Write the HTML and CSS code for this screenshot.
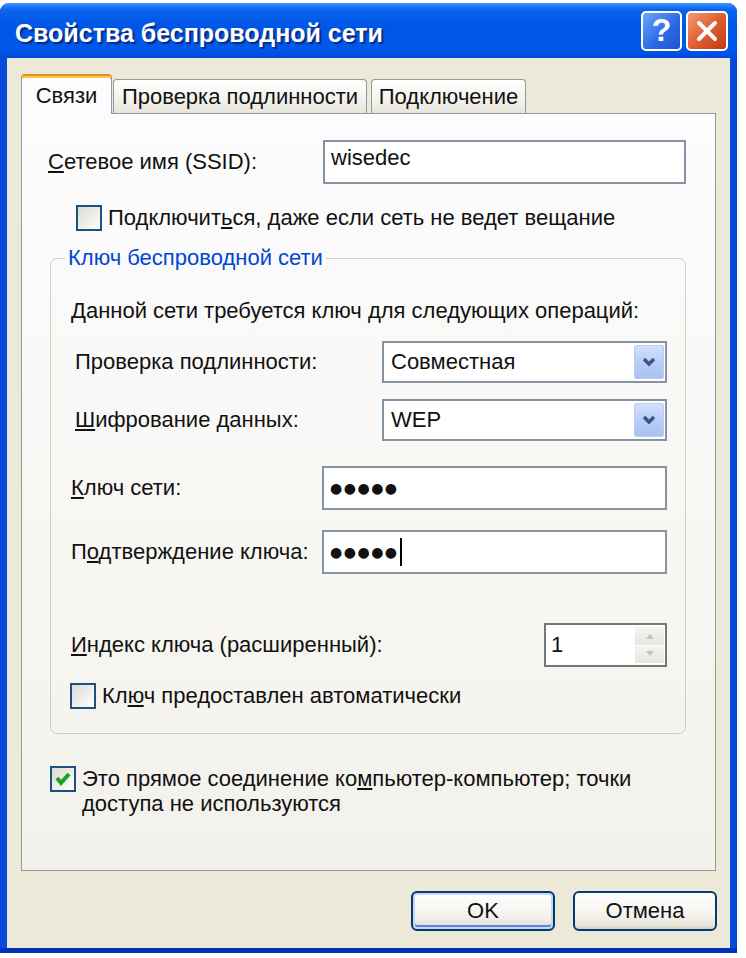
FILE: index.html
```html
<!DOCTYPE html>
<html lang="ru">
<head>
    <meta charset="UTF-8">
    <title>Свойства беспроводной сети</title>
    <link rel="stylesheet" href="styles.css">
</head>
<body>
    <div class="window">
        <div class="titlebar">
            <span class="title">Свойства беспроводной сети</span>
            <div class="caption-buttons">
                <span class="cap-btn help">?</span>
                <span class="cap-btn close">
                    <svg width="24" height="24" viewBox="0 0 24 24"><path d="M4 4 L20 20 M20 4 L4 20" stroke="#fff" stroke-width="4" stroke-linecap="round"/></svg>
                </span>
            </div>
        </div>
        <div class="client">
            <div class="tabs">
                <div class="tab active">Связи</div>
                <div class="tab auth">Проверка подлинности</div>
                <div class="tab conn">Подключение</div>
            </div>
            <div class="panel">
                <div class="row ssid-row">
                    <label><u>С</u>етевое имя (SSID):</label>
                    <div class="edit ssid">wisedec</div>
                </div>
                <div class="check-row broadcast">
                    <span class="checkbox"></span>
                    <span>Подключит<u>ь</u>ся, даже если сеть не ведет вещание</span>
                </div>
                <fieldset class="keybox">
                    <legend>Ключ беспроводной сети</legend>
                    <p class="intro">Данной сети требуется ключ для следующих операций:</p>
                    <div class="row combo-row first">
                        <label>Проверка по<u>д</u>линности:</label>
                        <div class="combo">
                            <span>Совместная</span>
                            <span class="drop"><svg width="14" height="10" viewBox="0 0 14 10"><polyline points="2,2 7,7 12,2" fill="none" stroke="#3F5482" stroke-width="3.5"/></svg></span>
                        </div>
                    </div>
                    <div class="row combo-row">
                        <label><u>Ш</u>ифрование данных:</label>
                        <div class="combo">
                            <span>WEP</span>
                            <span class="drop"><svg width="14" height="10" viewBox="0 0 14 10"><polyline points="2,2 7,7 12,2" fill="none" stroke="#3F5482" stroke-width="3.5"/></svg></span>
                        </div>
                    </div>
                    <div class="row key-row first">
                        <label><u>К</u>люч сети:</label>
                        <div class="edit key"><span class="dots">●●●●●</span></div>
                    </div>
                    <div class="row key-row">
                        <label>П<u>о</u>дтверждение ключа:</label>
                        <div class="edit key"><span class="dots">●●●●●</span><span class="caret"></span></div>
                    </div>
                    <div class="row index-row">
                        <label><u>И</u>ндекс ключа (расширенный):</label>
                        <div class="spin">
                            <span class="spin-value">1</span>
                            <span class="spin-btns">
                                <span class="spin-btn"><svg width="10" height="6" viewBox="0 0 10 6"><polygon points="1,6 5,1 9,6" fill="#C4C2B6"/></svg></span>
                                <span class="spin-btn"><svg width="10" height="6" viewBox="0 0 10 6"><polygon points="1,0 5,5 9,0" fill="#C4C2B6"/></svg></span>
                            </span>
                        </div>
                    </div>
                    <div class="check-row auto">
                        <span class="checkbox"></span>
                        <span>Кл<u>ю</u>ч предоставлен автоматически</span>
                    </div>
                </fieldset>
                <div class="check-row adhoc">
                    <span class="checkbox checked">
                        <svg width="18" height="18" viewBox="0 0 18 18"><polyline points="3,8 7,13 15,4" fill="none" stroke="#21A121" stroke-width="4"/></svg>
                    </span>
                    <span class="adhoc-text">Это прямое соединение ко<u>м</u>пьютер-компьютер; точки<br>доступа не используются</span>
                </div>
            </div>
            <div class="buttons">
                <button class="btn default">OK</button>
                <button class="btn">Отмена</button>
            </div>
        </div>
    </div>
</body>
</html>
```

FILE: styles.css
```css
*{
    box-sizing: border-box;
}
body{
    margin: 0;
    background: #fff;
    font-family: "Liberation Sans", Arial, sans-serif;
    font-size: 22px;
    color: #111;
}
.window{
    width: 737px;
    height: 950px;
    margin-top: 3px;
    display: flex;
    flex-direction: column;
    padding: 0 7px 5px;
    background: linear-gradient(to right, #0847D8, #0058EE 3%, #0058EE 97%, #0845D5);
    border-radius: 9px 9px 0 0;
    box-shadow: inset 0 -5px 0 #0030B8;
}
/* title bar */
.titlebar{
    height: 55px;
    margin: 0 -7px;
    padding: 0 9px 0 15px;
    display: flex;
    align-items: center;
    justify-content: space-between;
    border-radius: 9px 9px 0 0;
    background: linear-gradient(#3D95FF 0%, #0B63EE 12%, #0055E5 45%, #0058EA 85%, #0049D8 100%);
}
.title{
    padding-top: 6px;
    color: #fff;
    font-weight: 700;
    font-size: 25px;
    text-shadow: 2px 2px 1px #0A2A86;
}
.caption-buttons{
    display: flex;
    gap: 4px;
}
.cap-btn{
    width: 42px;
    height: 40px;
    border: 2px solid #fff;
    border-radius: 5px;
    display: flex;
    align-items: center;
    justify-content: center;
    color: #fff;
}
.help{
    width: 41px;
    background: linear-gradient(135deg, #6AA6FB, #2A67E2 60%, #1F55D0);
    font-size: 32px;
    font-weight: 700;
}
.close{
    background: linear-gradient(135deg, #F39A72, #DD5A2D 55%, #C03B16);
}
/* client area */
.client{
    flex: 1;
    display: flex;
    flex-direction: column;
    padding: 16px 14px 17px;
    background: #ECE9D8;
}
.tabs{
    display: flex;
    align-items: flex-end;
    height: 39px;
    position: relative;
    z-index: 1;
}
.tab{
    height: 34px;
    display: flex;
    align-items: center;
    justify-content: center;
    border: 1px solid #919B9C;
    border-bottom: none;
    border-radius: 4px 4px 0 0;
    background: linear-gradient(#FFFFFF, #F3F2EC 60%, #E6E4DA);
}
.tab.active{
    width: 91px;
    height: 40px;
    margin-bottom: -1px;
    padding-top: 2px;
    border-top: 2px solid #E68B2C;
    box-shadow: inset 0 2px 0 #FFC83C;
    background: #FCFCFE;
}
.tab.auth{
    width: 254px;
    margin-left: 1px;
}
.tab.conn{
    width: 155px;
    margin-left: 4px;
}
.panel{
    flex: 1;
    border: 1px solid #919B9C;
    background: linear-gradient(#FCFCFE, #F7F6F2 60%, #F2F1EB);
    padding: 26px 29px 0 28px;
}
.row{
    display: flex;
    align-items: center;
    justify-content: space-between;
}
.ssid-row label{
    margin-left: -2px;
}
.edit{
    height: 44px;
    border: 2px solid #8593A3;
    background: #fff;
    display: flex;
    align-items: center;
    padding: 0 6px;
}
.ssid{
    width: 363px;
    padding-bottom: 8px;
}
.check-row{
    display: flex;
    align-items: center;
    gap: 6px;
    line-height: 26px;
}
.checkbox{
    width: 26px;
    height: 26px;
    flex: none;
    border: 2px solid #1C5180;
    background: linear-gradient(135deg, #DCDCD5, #F4F4F0 70%, #fff);
    display: flex;
    align-items: center;
    justify-content: center;
}
.broadcast{
    margin: 21px 0 0 26px;
}
/* key group */
.keybox{
    margin: 14px 0 0;
    padding: 0 18px 24px 20px;
    border: 1px solid #D0D0BF;
    border-radius: 7px;
    min-width: 0;
}
.keybox legend{
    margin-left: -6px;
    padding: 0 3px;
    line-height: 26px;
    color: #0046D5;
}
.intro{
    margin: 27px 0 0;
    line-height: 26px;
}
.combo-row{
    margin-top: 16px;
}
.combo-row.first{
    margin-top: 17px;
}
.combo-row label{
    padding-left: 4px;
}
.combo{
    width: 285px;
    height: 42px;
    border: 2px solid #8593A3;
    background: #fff;
    display: flex;
    align-items: center;
    justify-content: space-between;
    padding: 2px 1px 2px 7px;
}
.drop{
    width: 30px;
    height: 100%;
    display: flex;
    align-items: center;
    justify-content: center;
    border: 1px solid #B9CCF3;
    border-radius: 2px;
    background: linear-gradient(#D3E0FC, #B9CEF8 50%, #A9C2F2);
}
.key-row{
    margin-top: 20px;
}
.key-row.first{
    margin-top: 25px;
}
.key{
    width: 345px;
}
.dots{
    font-family: "DejaVu Sans", sans-serif;
    font-size: 14px;
    letter-spacing: 1.5px;
}
.caret{
    width: 2px;
    height: 28px;
    margin-left: 1px;
    background: #000;
}
.index-row{
    margin-top: 49px;
}
.spin{
    width: 123px;
    height: 44px;
    border: 2px solid #767676;
    background: #fff;
    display: flex;
    justify-content: space-between;
    padding: 2px 1px 2px 5px;
}
.spin-value{
    align-self: center;
}
.spin-btns{
    width: 29px;
    display: flex;
    flex-direction: column;
    gap: 1px;
}
.spin-btn{
    flex: 1;
    display: flex;
    align-items: center;
    justify-content: center;
    background: linear-gradient(#F4F3EE, #E8E6DE);
}
.auto{
    margin: 16px 0 0 -1px;
}
.adhoc{
    margin-top: 32px;
    align-items: flex-start;
    line-height: 25px;
}
/* dialog buttons */
.buttons{
    display: flex;
    justify-content: flex-end;
    gap: 18px;
    margin: 20px -1px 0 0;
}
.btn{
    width: 144px;
    height: 40px;
    border: 2px solid #003C74;
    border-radius: 6px;
    background: linear-gradient(#FFFFFF, #F4F3EE 60%, #E6E3D8 90%, #D6D0C5);
    font-family: "Liberation Sans", Arial, sans-serif;
    font-size: 22px;
    color: #111;
    padding: 0;
}
.btn.default{
    box-shadow: inset 0 0 0 2px #C8D6F8, inset 0 -2px 0 2px #5A86E0;
}
```
